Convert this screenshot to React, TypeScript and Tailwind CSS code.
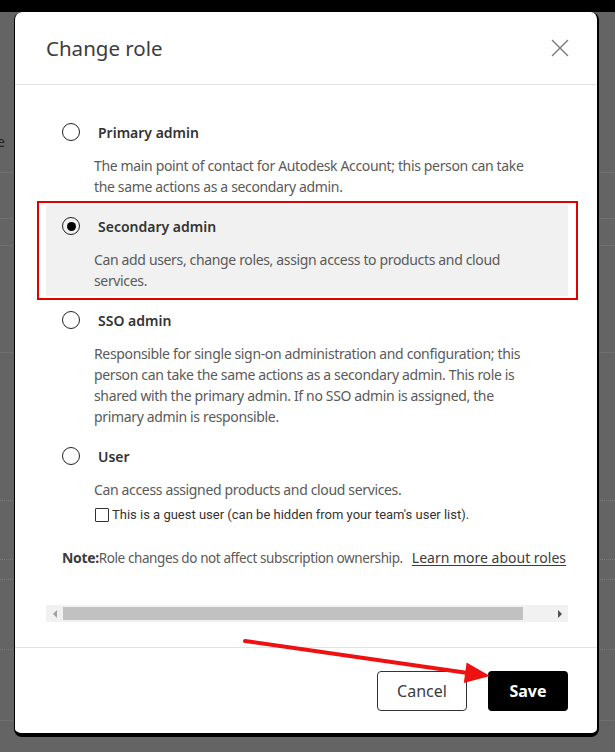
interface Role {
  id: string
  label: string
  lines: string[]
  selected?: boolean
  guest?: boolean
}

const roles: Role[] = [
  {
    id: 'primary',
    label: 'Primary admin',
    lines: [
      'The main point of contact for Autodesk Account; this person can take',
      'the same actions as a secondary admin.',
    ],
  },
  {
    id: 'secondary',
    label: 'Secondary admin',
    selected: true,
    lines: [
      'Can add users, change roles, assign access to products and cloud',
      'services.',
    ],
  },
  {
    id: 'sso',
    label: 'SSO admin',
    lines: [
      'Responsible for single sign-on administration and configuration; this',
      'person can take the same actions as a secondary admin. This role is',
      'shared with the primary admin. If no SSO admin is assigned, the',
      'primary admin is responsible.',
    ],
  },
  {
    id: 'user',
    label: 'User',
    guest: true,
    lines: ['Can access assigned products and cloud services.'],
  },
]

function Radio({ checked }: { checked?: boolean }) {
  return (
    <span className="flex h-[18px] w-[18px] shrink-0 items-center justify-center rounded-full border-[1.5px] border-[#222]">
      {checked && <span className="h-[9px] w-[9px] rounded-full bg-black" />}
    </span>
  )
}

function CloseIcon() {
  return (
    <svg width="18" height="18" viewBox="0 0 18 18" className="text-[#777]">
      <path d="M1 1L17 17M17 1L1 17" stroke="currentColor" strokeWidth="1.4" />
    </svg>
  )
}

export default function App() {
  return (
    <div className="relative h-[752px] w-[615px] overflow-hidden bg-[#646464] font-['Noto_Sans',sans-serif]">
      {/* page behind the dialog */}
      <div className="flex flex-col">
        <div className="h-[12px] bg-black" />
        <div className="h-[161px] border-b border-[#6f6f6f]" />
        <div className="h-[46px] border-b border-[#6f6f6f]" />
        <div className="h-[27px] border-b border-[#6f6f6f]" />
        <div className="h-[107px] border-b border-[#6f6f6f]" />
        <div className="h-[148px] border-b border-dotted border-[#7a7a7a]" />
        <div className="h-[59px] border-b border-dotted border-[#7a7a7a]" />
        <div className="h-[20px] border-b border-dotted border-[#7a7a7a]" />
        <div className="h-[70px] border-b border-dotted border-[#7a7a7a]" />
        <div className="h-[71px] border-b border-[#6f6f6f]" />
      </div>
      <span className="absolute left-[-3px] top-[131px] text-[14px] text-[#222]">e</span>

      {/* dialog */}
      <div className="absolute left-[14px] top-[12px] flex w-[585px] flex-col rounded-[8px] border-b-4 border-l border-r-2 border-black bg-white">
        <div className="flex h-[73px] items-center justify-between border-b border-[#e2e2e2] pl-[31px] pr-[28px]">
          <h2 className="text-[20.5px] leading-none text-[#3c3c3c]">Change role</h2>
          <CloseIcon />
        </div>

        <div className="flex flex-col pl-[31px] pr-[29px] pt-[26px] pb-[25px]">
          <div className="flex flex-col gap-[3px]">
            {roles.map(role => (
              <div
                key={role.id}
                className={`pt-[10px] ${role.guest ? 'pb-[6px]' : 'pb-[5px]'} ${role.selected ? 'bg-[#f1f1f1]' : ''}`}
              >
                <div className="flex h-[22px] items-center pl-[16px]">
                  <Radio checked={role.selected} />
                  <span className="ml-[18px] text-[14px] font-semibold text-[#333]">{role.label}</span>
                </div>
                <p className="mt-[12px] whitespace-nowrap pl-[48px] text-[14px] leading-[21px] tracking-[-0.35px] text-[#5a5a5a]">
                  {role.lines.map((line, i) => (
                    <span key={i}>
                      {line}
                      {i < role.lines.length - 1 && <br />}
                    </span>
                  ))}
                </p>
                {role.guest && (
                  <label className="mt-[5px] flex h-[20px] items-center pl-[49px] font-['Roboto',sans-serif] text-[13px] text-[#333]">
                    <span className="h-[14px] w-[14px] rounded-[1px] border border-[#333] bg-white" />
                    <span className="ml-[3px]">This is a guest user (can be hidden from your team's user list).</span>
                  </label>
                )}
              </div>
            ))}
          </div>

          <p className="mt-[16px] whitespace-nowrap pl-[16px] text-[14px] leading-[21px] text-[#3c3c3c]">
            <span className="font-bold tracking-[-0.35px]">Note:</span>
            <span className="text-[13.5px] tracking-[-0.4px] text-[#5a5a5a]">Role changes do not affect subscription ownership.</span>
            <a className="ml-[9px] text-[#3c3c3c] underline underline-offset-2">Learn more about roles</a>
          </p>

          {/* horizontal scrollbar */}
          <div className="mt-[36px] flex h-[17px] items-center bg-[#f1f1f1]">
            <span className="flex w-[17px] justify-center">
              <span className="h-0 w-0 border-y-[4px] border-r-[4px] border-y-transparent border-r-[#a3a3a3]" />
            </span>
            <span className="h-[13px] w-[460px] bg-[#c1c1c1]" />
            <span className="flex flex-1 justify-end pr-[6px]">
              <span className="h-0 w-0 border-y-[4px] border-l-[4px] border-y-transparent border-l-[#505050]" />
            </span>
          </div>
        </div>

        <div className="flex justify-end gap-[21px] border-t border-[#e2e2e2] pl-[31px] pr-[29px] pt-[23px] pb-[22px]">
          <button className="h-[40px] w-[90px] rounded-[4px] border border-[#333] bg-white text-[16px] text-[#3c3c3c]">
            Cancel
          </button>
          <button className="h-[40px] w-[80px] rounded-[4px] bg-black text-[16px] font-bold text-white">
            Save
          </button>
        </div>
      </div>

      {/* annotations */}
      <div className="pointer-events-none absolute left-[37px] top-[201px] h-[99px] w-[541px] border-2 border-[#e00000]" />
      <svg className="pointer-events-none absolute left-0 top-0" width="615" height="752">
        <line x1="245" y1="641" x2="468" y2="673" stroke="#ee1111" strokeWidth="4" strokeLinecap="round" />
        <polygon points="490,676 466.6,662.5 463.8,683" fill="#ee1111" />
      </svg>
    </div>
  )
}
